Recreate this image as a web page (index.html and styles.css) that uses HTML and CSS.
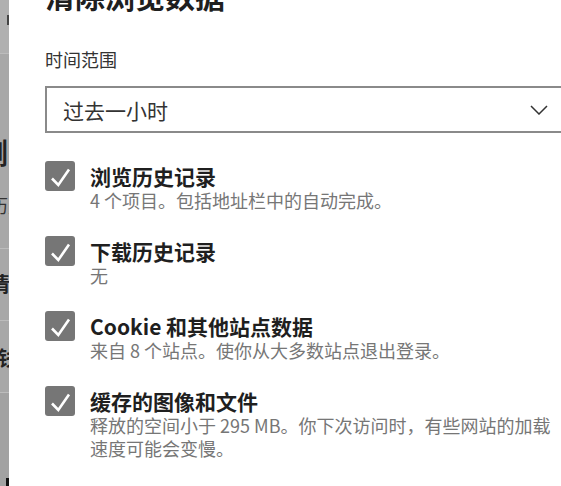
FILE: index.html
```html
<!DOCTYPE html>
<html lang="zh-CN">
<head>
  <meta charset="UTF-8">
  <title>清除浏览数据</title>
  <meta name="viewport" content="width=device-width, initial-scale=1">
  <link rel="stylesheet" href="styles.css">
</head>
<body>

<!-- page behind the dialog -->
<div class="backdrop">
  <div class="bg-row bg-top"><span class="bg-mark"></span></div>
  <div class="bg-row bg-main">
    <span class="bg-head">浏览</span>
    <span class="bg-text">历史</span>
  </div>
  <div class="bg-row bg-short"><span class="bg-item">清除</span></div>
  <div class="bg-row bg-short"><span class="bg-item">钱包</span></div>
  <div class="bg-row bg-bottom"><span class="bg-dot"></span></div>
</div>

<!-- DIALOG -->
<div class="dialog">
  <h1 class="dialog-title">清除浏览数据</h1>

  <label class="field-label">时间范围</label>
  <div class="select">
    <span>过去一小时</span>
    <svg class="chevron" width="18" height="10" viewBox="0 0 18 10">
      <polyline points="1,1 9,9 17,1" fill="none" stroke="#333" stroke-width="1.5"/>
    </svg>
  </div>

  <div class="options">
    <div class="option">
      <svg class="check" width="30" height="30" viewBox="0 0 30 30">
        <rect width="30" height="30" rx="3" fill="#767676"/>
        <polyline points="7,17.5 13.3,24 24,8.5" fill="none" stroke="#fff" stroke-width="2.6"/>
      </svg>
      <div class="option-text">
        <div class="option-title">浏览历史记录</div>
        <div class="option-desc">4 个项目。包括地址栏中的自动完成。</div>
      </div>
    </div>

    <div class="option">
      <svg class="check" width="30" height="30" viewBox="0 0 30 30">
        <rect width="30" height="30" rx="3" fill="#767676"/>
        <polyline points="7,17.5 13.3,24 24,8.5" fill="none" stroke="#fff" stroke-width="2.6"/>
      </svg>
      <div class="option-text">
        <div class="option-title">下载历史记录</div>
        <div class="option-desc">无</div>
      </div>
    </div>

    <div class="option">
      <svg class="check" width="30" height="30" viewBox="0 0 30 30">
        <rect width="30" height="30" rx="3" fill="#767676"/>
        <polyline points="7,17.5 13.3,24 24,8.5" fill="none" stroke="#fff" stroke-width="2.6"/>
      </svg>
      <div class="option-text">
        <div class="option-title">Cookie 和其他站点数据</div>
        <div class="option-desc">来自 8 个站点。使你从大多数站点退出登录。</div>
      </div>
    </div>

    <div class="option">
      <svg class="check" width="30" height="30" viewBox="0 0 30 30">
        <rect width="30" height="30" rx="3" fill="#767676"/>
        <polyline points="7,17.5 13.3,24 24,8.5" fill="none" stroke="#fff" stroke-width="2.6"/>
      </svg>
      <div class="option-text">
        <div class="option-title">缓存的图像和文件</div>
        <div class="option-desc">释放的空间小于 295 MB。你下次访问时，有些网站的加载速度可能会变慢。</div>
      </div>
    </div>
  </div>
</div>

</body>
</html>
```

FILE: styles.css
```css
html, body {
  height: 486px;
}

body {
  margin: 0;
  display: flex;
  overflow: hidden;
  font-family: "Noto Sans CJK SC", "Microsoft YaHei", sans-serif;
  background-color: #fff;
}

/* background page */
.backdrop {
  width: 9px;
  flex-shrink: 0;
  display: flex;
  flex-direction: column;
  overflow: hidden;
  background-color: #a8a8a8;
}

.bg-row {
  position: relative;
  overflow: hidden;
  border-bottom: 1px solid #bcbcbc;
}

.bg-top {
  height: 53px;
  background-color: #b0b0b0;
}

.bg-mark {
  position: absolute;
  left: 7px;
  top: 15px;
  width: 2px;
  height: 10px;
  background-color: #444;
}

.bg-main {
  height: 194px;
}

.bg-head {
  position: absolute;
  left: -20px;
  top: 80px;
  font-size: 28px;
  font-weight: bold;
  line-height: 36px;
  color: #222;
  white-space: nowrap;
}

.bg-text {
  position: absolute;
  left: -10px;
  top: 139px;
  font-size: 18px;
  line-height: 24px;
  color: #333;
  white-space: nowrap;
}

.bg-short {
  height: 71px;
}

.bg-item {
  position: absolute;
  left: -10px;
  top: 22px;
  font-size: 20px;
  font-weight: bold;
  line-height: 26px;
  color: #222;
  white-space: nowrap;
}

.bg-short + .bg-short .bg-item {
  left: -2px;
  top: 24px;
}

.bg-bottom {
  flex: 1;
  border-bottom: none;
  background-color: #a2a2a2;
}

.bg-dot {
  position: absolute;
  left: 6px;
  bottom: 0;
  width: 3px;
  height: 8px;
  background-color: #111;
}

/* dialog */
.dialog {
  flex: 1;
  min-width: 0;
  overflow: hidden;
  padding-left: 36px;
}

.dialog-title {
  margin: -25px 0 0;
  font-size: 30px;
  line-height: 40px;
  font-weight: bold;
  color: #1f1f1f;
}

.field-label {
  display: block;
  margin-top: 32px;
  font-size: 18px;
  line-height: 24px;
  color: #333;
}

.select {
  display: flex;
  align-items: center;
  justify-content: space-between;
  box-sizing: border-box;
  width: 528px;
  height: 47px;
  margin-top: 15px;
  padding: 0 23px 0 16px;
  border: 2px solid #8a8a8a;
  font-size: 21px;
  color: #333;
}

.chevron {
  display: block;
}

.options {
  margin-top: 28px;
}

.option {
  display: flex;
  gap: 15px;
  margin-bottom: 24px;
}

.check {
  display: block;
  flex-shrink: 0;
}

.option-text {
  padding-top: 2px;
}

.option-title {
  font-size: 21px;
  line-height: 26px;
  font-weight: bold;
  color: #1f1f1f;
}

.option-desc {
  max-width: 470px;
  font-size: 18px;
  line-height: 23px;
  color: #767676;
}
```
